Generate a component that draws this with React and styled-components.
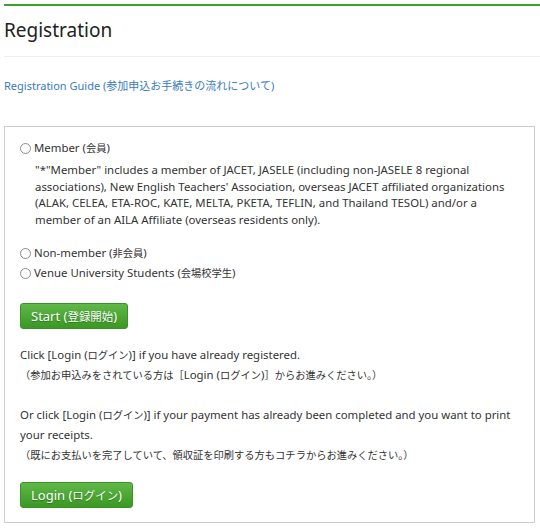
import React from "react";
import styled, { createGlobalStyle } from "styled-components";

const GlobalStyle = createGlobalStyle`
    body{
        margin: 0;
        background: #ffffff;
        font-family: 'Noto Sans', 'Noto Sans CJK JP', sans-serif;
        color: #333333;
    }
`

const App = () => {
    return (
        <>
            <GlobalStyle />
            <Page>
                <Header>
                    <h1>Registration</h1>
                </Header>
                <GuideLink href="#">Registration Guide (<Ja>参加申込お手続きの流れについて</Ja>)</GuideLink>
                <Panel>
                    <Option>
                        <Radio type="radio" name="kind" />
                        <span>Member (<Ja>会員</Ja>)</span>
                    </Option>
                    <Note>
                        "*"Member" includes a member of JACET, JASELE (including non-JASELE 8 regional associations), New English Teachers' Association, overseas JACET affiliated organizations (ALAK, CELEA, ETA-ROC, KATE, MELTA, PKETA, TEFLIN, and Thailand TESOL) and/or a member of an AILA Affiliate (overseas residents only).
                    </Note>
                    <Option $top={15}>
                        <Radio type="radio" name="kind" />
                        <span>Non-member (<Ja>非会員</Ja>)</span>
                    </Option>
                    <Option>
                        <Radio type="radio" name="kind" />
                        <span>Venue University Students (<Ja>会場校学生</Ja>)</span>
                    </Option>
                    <GreenButton $top={20}>Start (<Ja>登録開始</Ja>)</GreenButton>
                    <Info>
                        Click [Login (<Ja>ログイン</Ja>)] if you have already registered.<br />
                        <Ja>（参加お申込みをされている方は［</Ja>Login (<Ja>ログイン</Ja>)<Ja>］からお進みください。）</Ja><br />
                        <br />
                        Or click [Login (<Ja>ログイン</Ja>)] if your payment has already been completed and you want to print your receipts.<br />
                        <Ja>（既にお支払いを完了していて、領収証を印刷する方もコチラからお進みください。）</Ja>
                    </Info>
                    <GreenButton $top={17}>Login (<Ja>ログイン</Ja>)</GreenButton>
                </Panel>
            </Page>
        </>
    )
}

const Page = styled.div`
    padding: 4px 5px 6px 4px;
`
const Header = styled.div`
    border-top: 2px solid #3aa32c;
    border-bottom: 1px solid #eeeeee;
    margin-right: -5px;
    h1{
        margin: 0;
        padding: 12px 0 14px;
        font-weight: 400;
        font-size: 19px;
        line-height: 24px;
        color: #222222;
    }
`
const Ja = styled.span`
    font-size: 0.9em;
    line-height: 1;
`
const GuideLink = styled.a`
    display: block;
    margin-top: 21px;
    font-size: 11px;
    line-height: 16px;
    color: #3a7bc0;
    text-decoration: none;
    ${Ja}{
        font-size: 1em;
    }
`
const Panel = styled.section`
    margin-top: 32px;
    border: 1px solid #cccccc;
    padding: 11px 8px 14px 15px;
    font-size: 11.4px;
`
const Option = styled.label`
    display: flex;
    align-items: center;
    gap: 3px;
    margin-top: ${props => props.$top || 0}px;
    line-height: 20px;
    color: #333333;
`
const Radio = styled.input`
    appearance: none;
    width: 11px;
    height: 11px;
    margin: 0;
    border: 1px solid #8c8c8c;
    border-radius: 50%;
    background: #ffffff;
`
const Note = styled.p`
    width: 478px;
    margin: 4px 0 0 15px;
    line-height: 16.5px;
    color: #333333;
`
const GreenButton = styled.button`
    display: block;
    margin-top: ${props => props.$top}px;
    height: 26px;
    padding: 0 10px;
    border: 1px solid #3a9127;
    border-radius: 3px;
    background: linear-gradient(#60b848, #3a9823);
    color: #ffffff;
    font-family: 'Noto Sans', 'Noto Sans CJK JP', sans-serif;
    font-size: 13px;
    text-shadow: 0 1px 1px rgba(0,0,0,0.3);
    ${Ja}{
        font-size: 0.88em;
    }
`
const Info = styled.p`
    margin: 16px 0 0 0;
    line-height: 20px;
    color: #333333;
`

export default App;
